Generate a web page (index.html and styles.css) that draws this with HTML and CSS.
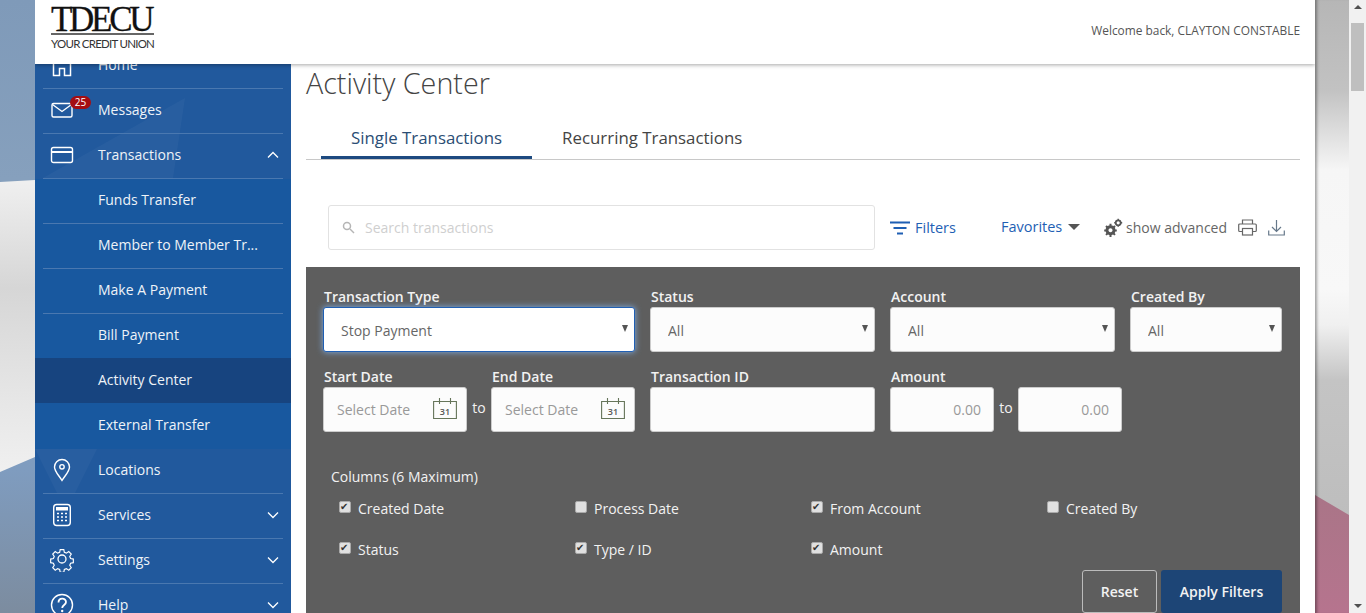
FILE: index.html
```html
<!DOCTYPE html>
<html lang="en">
<head>
  <meta charset="UTF-8">
  <title>Activity Center</title>
  <link rel="stylesheet" href="styles.css">
</head>
<body>

  <div class="page">
    <div class="edge edge-left"></div>

    <div class="shell">
      <header class="topbar">
        <div class="logo">
          <div class="logo-name">TDECU</div>
          <div class="logo-tag">YOUR CREDIT UNION</div>
        </div>
        <div class="welcome">Welcome back, CLAYTON CONSTABLE</div>
      </header>

      <nav class="sidebar">
        <svg class="watermark" width="256" height="613" viewBox="0 0 256 613" fill="#fff" fill-opacity="0.035"><path d="M8 178 150 98l-12 80z"/><path d="M0 449h62l-22 44H22z"/></svg>
        <a class="nav-row">
          <span class="nav-icon"><svg width="24" height="24" viewBox="0 0 24 24" fill="none" stroke="#fff" stroke-width="1.5"><path d="M12 1 3.500 8v14.500h6v-7h5v7h6V8z"/></svg></span>
          <span class="nav-text">Home</span>
        </a>
        <a class="nav-row">
          <span class="nav-icon">
            <svg width="24" height="24" viewBox="0 0 24 24" fill="none" stroke="#fff" stroke-width="1.400"><rect x="2" y="5.500" width="20" height="13.500" rx="1.500"/><path d="m2.500 6.500 9.500 7 9.500-7"/></svg>
            <span class="badge">25</span>
          </span>
          <span class="nav-text">Messages</span>
        </a>
        <a class="nav-row">
          <span class="nav-icon"><svg width="24" height="24" viewBox="0 0 24 24" fill="none" stroke="#fff" stroke-width="1.400"><rect x="1.500" y="4.500" width="21" height="15" rx="2"/><path d="M1.500 9h21" stroke-width="2"/></svg></span>
          <span class="nav-text">Transactions</span>
          <svg class="chev" width="12" height="8" viewBox="0 0 12 8" fill="none" stroke="#fff" stroke-width="1.300"><path d="m1 6.500 5-5 5 5"/></svg>
        </a>
        <div class="subnav">
          <a class="sub-row"><span>Funds Transfer</span></a>
          <a class="sub-row"><span>Member to Member Tr...</span></a>
          <a class="sub-row"><span>Make A Payment</span></a>
          <a class="sub-row"><span>Bill Payment</span></a>
          <a class="sub-row active"><span>Activity Center</span></a>
          <a class="sub-row last"><span>External Transfer</span></a>
        </div>
        <a class="nav-row">
          <span class="nav-icon"><svg width="24" height="24" viewBox="0 0 24 24" fill="none" stroke="#fff" stroke-width="1.400"><path d="M12 22.500C9 17.500 4.500 13.500 4.500 9a7.500 7.500 0 0 1 15 0c0 4.500-4.500 8.500-7.500 13.500z"/><circle cx="12" cy="8.800" r="2.200"/></svg></span>
          <span class="nav-text">Locations</span>
        </a>
        <a class="nav-row">
          <span class="nav-icon"><svg width="24" height="24" viewBox="0 0 24 24" fill="none" stroke="#fff" stroke-width="1.400"><rect x="3.700" y="1.500" width="16.600" height="21" rx="3"/><rect x="6" y="4" width="12" height="3.500" fill="#fff" stroke="none"/><path d="M7 10.500h2m2 0h2m2 0h2M7 14h2m2 0h2m2 0h2M7 17.500h2m2 0h2m2 0h2" stroke-width="1.600"/></svg></span>
          <span class="nav-text">Services</span>
          <svg class="chev" width="12" height="8" viewBox="0 0 12 8" fill="none" stroke="#fff" stroke-width="1.300"><path d="m1 1.500 5 5 5-5"/></svg>
        </a>
        <a class="nav-row">
          <span class="nav-icon"><svg width="24" height="24" viewBox="0 0 24 24" fill="none" stroke="#fff" stroke-width="1.300"><path d="m10 1.500 4 0 .6 3 2.300 1 2.600-1.700 2.800 2.800-1.700 2.600 1 2.300 3 .6 0 4-3 .6-1 2.300 1.700 2.600-2.800 2.800-2.600-1.700-2.300 1-.6 3-4 0-.6-3-2.300-1-2.600 1.700-2.800-2.800 1.700-2.600-1-2.300-3-.6 0-4 3-.6 1-2.300-1.700-2.600 2.800-2.800 2.600 1.700 2.300-1z" transform="translate(1.200 .2) scale(.9)"/><circle cx="12" cy="11" r="4"/></svg></span>
          <span class="nav-text">Settings</span>
          <svg class="chev" width="12" height="8" viewBox="0 0 12 8" fill="none" stroke="#fff" stroke-width="1.300"><path d="m1 1.500 5 5 5-5"/></svg>
        </a>
        <a class="nav-row">
          <span class="nav-icon"><svg width="24" height="24" viewBox="0 0 24 24" fill="none" stroke="#fff" stroke-width="1.400"><circle cx="12" cy="12" r="10.500"/><path d="M8.500 9.500c0-5 7.500-5 7.500-.5 0 3-3.800 3-3.800 6" stroke-width="1.800"/><circle cx="12.200" cy="18" r="1.200" fill="#fff" stroke="none"/></svg></span>
          <span class="nav-text">Help</span>
          <svg class="chev" width="12" height="8" viewBox="0 0 12 8" fill="none" stroke="#fff" stroke-width="1.300"><path d="m1 1.500 5 5 5-5"/></svg>
        </a>
      </nav>

      <main class="content">
        <h1 class="title">Activity Center</h1>

        <div class="tabs">
          <a class="tab current">Single Transactions</a>
          <a class="tab">Recurring Transactions</a>
        </div>

        <div class="toolbar">
          <div class="search">
            <svg width="13" height="13" viewBox="0 0 13 13" fill="none" stroke="#b5b5b5" stroke-width="1.500"><circle cx="5" cy="5" r="3.500"/><path d="m8 8 4 4"/></svg>
            <input class="search-input" type="text" placeholder="Search transactions">
          </div>
          <a class="filters-link">
            <svg width="20" height="14" viewBox="0 0 20 14" fill="none" stroke="#1f5fb4" stroke-width="2"><path d="M0 1.500h20M3.500 7h13M7 12.500h6"/></svg>
            Filters
          </a>
          <a class="favorites-link">Favorites <span class="caret"></span></a>
          <a class="advanced-link">
            <svg width="20" height="20" viewBox="0 0 20 20" fill="#555"><path d="M7.500 7.200a5 5 0 1 0 .01 0zm0 3a2 2 0 1 1-.01 0z" fill-rule="evenodd"/><path d="M7.500 5.800v2.400M7.500 16.500v2.400M1.200 12.400h2.400M11.400 12.400h2.400M3 8l1.700 1.700M10.300 15.200l1.700 1.700M3 16.900l1.700-1.700M10.300 9.700 12 8" stroke="#555" stroke-width="2"/><circle cx="15.200" cy="4.800" r="2.500" fill="none" stroke="#555" stroke-width="1.800"/><path d="M15.200.8v1.200M15.200 7.600v1.200M11.200 4.800h1.200M18 4.800h1.200" stroke="#555" stroke-width="1.400"/></svg>
            show advanced
          </a>
          <svg class="tool-icon" width="19" height="17" viewBox="0 0 19 17" fill="none" stroke="#666" stroke-width="1.200"><path d="M4.500 5V1h10v4M4.500 12.500H1.700A1 1 0 0 1 .7 11.500V6a1 1 0 0 1 1-1h15.600a1 1 0 0 1 1 1v5.500a1 1 0 0 1-1 1h-2.800"/><rect x="4.500" y="9.500" width="10" height="6.500"/></svg>
          <svg class="tool-icon" width="17" height="17" viewBox="0 0 17 17" fill="none" stroke="#66788a" stroke-width="1.200"><path d="M8.500 1v11M4 8l4.500 4.500L13 8M.7 11.500v4.500h15.600v-4.500"/></svg>
        </div>

        <section class="panel">
          <div class="field-row">
            <div class="field w-type">
              <label class="field-label" for="type">Transaction Type</label>
              <div class="select-wrap">
                <select id="type" class="control focused"><option>Stop Payment</option></select>
              </div>
            </div>
            <div class="field w-mid">
              <label class="field-label" for="status">Status</label>
              <div class="select-wrap">
                <select id="status" class="control"><option>All</option></select>
              </div>
            </div>
            <div class="field w-mid">
              <label class="field-label" for="account">Account</label>
              <div class="select-wrap">
                <select id="account" class="control"><option>All</option></select>
              </div>
            </div>
            <div class="field w-small">
              <label class="field-label" for="by">Created By</label>
              <div class="select-wrap">
                <select id="by" class="control"><option>All</option></select>
              </div>
            </div>
          </div>

          <div class="field-row second">
            <div class="field w-type">
              <div class="date-pair">
                <div class="field w-date">
                  <label class="field-label" for="start">Start Date</label>
                  <div class="date-box">
                    <input id="start" class="control date" type="text" placeholder="Select Date">
                    <svg class="cal" width="24" height="21" viewBox="0 0 24 21" fill="none" stroke="#66755a" stroke-width="1.100"><path d="M.6 3.500h22.800v17H.6zM6.500 0v6M17.500 0v6"/><text x="12" y="16.500" text-anchor="middle" class="cal-text">31</text></svg>
                  </div>
                </div>
                <span class="to">to</span>
                <div class="field w-date">
                  <label class="field-label" for="end">End Date</label>
                  <div class="date-box">
                    <input id="end" class="control date" type="text" placeholder="Select Date">
                    <svg class="cal" width="24" height="21" viewBox="0 0 24 21" fill="none" stroke="#66755a" stroke-width="1.100"><path d="M.6 3.500h22.800v17H.6zM6.500 0v6M17.500 0v6"/><text x="12" y="16.500" text-anchor="middle" class="cal-text">31</text></svg>
                  </div>
                </div>
              </div>
            </div>
            <div class="field w-mid">
              <label class="field-label" for="txid">Transaction ID</label>
              <input id="txid" class="control" type="text">
            </div>
            <div class="field">
              <label class="field-label" for="min">Amount</label>
              <div class="amount-pair">
                <input id="min" class="control amount" type="text" placeholder="0.00">
                <span class="to">to</span>
                <input id="max" class="control amount" type="text" placeholder="0.00">
              </div>
            </div>
          </div>

          <div class="columns-title">Columns (6 Maximum)</div>
          <div class="columns-grid">
            <label class="check"><input type="checkbox" checked> Created Date</label>
            <label class="check"><input type="checkbox"> Process Date</label>
            <label class="check"><input type="checkbox" checked> From Account</label>
            <label class="check"><input type="checkbox"> Created By</label>
            <label class="check"><input type="checkbox" checked> Status</label>
            <label class="check"><input type="checkbox" checked> Type / ID</label>
            <label class="check"><input type="checkbox" checked> Amount</label>
          </div>

          <div class="actions">
            <button class="btn btn-reset">Reset</button>
            <button class="btn btn-apply">Apply Filters</button>
          </div>
        </section>
      </main>
    </div>

    <div class="edge edge-right"></div>

    <div class="scrollbar">
      <span class="arrow up"></span>
      <div class="thumb"></div>
      <span class="arrow down"></span>
    </div>
  </div>

</body>
</html>
```

FILE: styles.css
```css
* {
  box-sizing: border-box;
}
html, body {
  margin: 0;
  height: 100%;
  overflow: hidden;
}
body {
  font-family: "Open Sans", sans-serif;
  font-size: 14px;
  color: #555;
}
.page {
  display: flex;
  height: 613px;
}

/* photo behind the shell */
.edge {
  position: relative;
  width: 35px;
  flex: none;
}
.edge-left {
  background: linear-gradient(#7f9ab9 0, #86a0bd 180px, #7f9cbf 470px, #7c8c9f 613px);
}
.edge-left::before {
  content: "";
  position: absolute;
  top: 178px;
  left: 0;
  right: 0;
  height: 296px;
  background: linear-gradient(#f0f0f0 0, #d6d6d6 110px, #e6e6e6 220px, #f0f0f0 296px);
  clip-path: polygon(0 4px, 100% 2px, 100% 279px, 0 294px);
}
.edge-right {
  width: 34px;
  background: linear-gradient(#b6b6b6 0, #c2c2c2 90px, #f6f6f6 170px, #f8f8f8 290px, #f0f0f0 325px, #c4c4c4 380px, #bdbdbd 520px);
  box-shadow: inset 4px 0 3px -2px rgba(0,0,0,0.35);
}
.edge-right::before {
  content: "";
  position: absolute;
  top: 490px;
  left: 0;
  right: 0;
  bottom: 0;
  background: linear-gradient(#a97587, #b6748e);
  box-shadow: inset 4px 0 3px -2px rgba(0,0,0,0.35);
  clip-path: polygon(0 5px, 100% 25px, 100% 100%, 0 100%);
}

.shell {
  position: relative;
  display: flex;
  width: 1280px;
  flex: none;
  background: #fff;
  overflow: hidden;
}
.topbar {
  position: absolute;
  top: 0;
  left: 0;
  right: 0;
  z-index: 5;
  height: 64px;
  display: flex;
  justify-content: space-between;
  padding: 7px 15px 0 16px;
  background: #fff;
  box-shadow: 0 1px 4px rgba(0,0,0,0.35);
}
.logo {
  width: 103px;
  color: #111;
}
.logo-name {
  font-family: "Liberation Serif", serif;
  font-size: 35px;
  line-height: 25px;
  height: 28px;
  letter-spacing: -3.300px;
  -webkit-text-stroke: 0.3px #111;
  border-bottom: 2px solid #666;
  white-space: nowrap;
}
.logo-tag {
  font-family: "Lato", sans-serif;
  font-size: 11.500px;
  line-height: 13px;
  letter-spacing: -0.750px;
  margin-top: 2px;
  white-space: nowrap;
  color: #333;
}
.welcome {
  margin-top: 15px;
  font-size: 11.900px;
  color: #555;
}

/* left menu */
.sidebar {
  position: relative;
  width: 256px;
  flex: none;
  padding-top: 44px;
  background: #21599d;
  color: #eef3f8;
}
.watermark {
  position: absolute;
  top: 0;
  left: 0;
}
.nav-row {
  position: relative;
  display: flex;
  align-items: center;
  height: 45px;
  margin: 0 8px;
  border-bottom: 1px solid #4a78b0;
  padding-left: 7px;
  font-size: 14px;
  font-weight: 500;
}
.nav-icon {
  position: relative;
  width: 24px;
  height: 24px;
  margin: 0 24px 2px 0;
}
.nav-text {
  flex: 1;
  margin-bottom: 4px;
}
.chev {
  margin: 0 4px 2px 0;
}
.badge {
  position: absolute;
  top: -2px;
  left: 20px;
  width: 21px;
  height: 13px;
  border-radius: 7px;
  background: #a50d12;
  color: #fff;
  font-size: 10px;
  line-height: 13px;
  text-align: center;
}
.subnav {
  position: relative;
  background: #18589f;
}
.sub-row {
  display: block;
  height: 45px;
  padding: 0 8px;
  font-size: 14px;
  font-weight: 500;
}
.sub-row span {
  display: block;
  height: 45px;
  line-height: 42px;
  padding-left: 55px;
  border-bottom: 1px solid #4a78b0;
}
.sub-row.active {
  background: #17447f;
  margin-top: -1px;
}
.sub-row.active span {
  border-bottom: 0;
  line-height: 44px;
}
.sub-row.last {
  height: 46px;
}
.sub-row.last span {
  border-bottom: 0;
  line-height: 44px;
}

/* main column */
.content {
  flex: 1;
  padding: 63px 15px 0;
  min-width: 0;
}
.title {
  margin: 0;
  font-size: 28.700px;
  font-weight: 300;
  line-height: 40px;
  color: #444;
}
.tabs {
  display: flex;
  margin-top: 17px;
  padding-left: 15px;
  height: 40px;
  border-bottom: 1px solid #c8c8c8;
}
.tab {
  padding: 0 30px;
  font-size: 16.850px;
  line-height: 36px;
  height: 39px;
  color: #444;
}
.tab.current {
  border-bottom: 3px solid #1d4a80;
  color: #2b4d74;
}
.toolbar {
  display: flex;
  align-items: center;
  height: 45px;
  margin: 45px 0 17px 22px;
}
.search {
  display: flex;
  align-items: center;
  width: 547px;
  height: 45px;
  padding-left: 13px;
  border: 1px solid #e2e2e2;
  border-radius: 3px;
}
.search-input {
  flex: 1;
  border: 0;
  outline: 0;
  margin-left: 8px;
  font: 14px "Open Sans", sans-serif;
}
.search-input::placeholder {
  color: #cfcfcf;
}
.filters-link {
  display: flex;
  align-items: center;
  gap: 5px;
  margin-left: 15px;
  color: #1f5fb4;
  font-weight: 500;
  font-size: 14.500px;
}
.favorites-link {
  margin-left: 45px;
  margin-top: -2px;
  color: #1f5fb4;
  font-weight: 500;
  font-size: 14.500px;
}
.caret {
  display: inline-block;
  margin-left: 2px;
  vertical-align: 2px;
  border: 6px solid transparent;
  border-bottom: 0;
  border-top: 6px solid #555;
}
.advanced-link {
  display: flex;
  align-items: center;
  gap: 3px;
  margin-left: 23px;
  font-size: 14px;
  color: #666;
}
.tool-icon {
  margin-left: 11px;
}

/* filter panel */
.panel {
  height: 400px;
  padding: 20px 18px 0 17px;
  background: #5e5e5e;
  color: #fff;
}
.field-row {
  display: flex;
  gap: 15px;
}
.field-row.second {
  margin-top: 15px;
}
.field-label {
  display: block;
  height: 20px;
  padding-left: 1px;
  font-size: 14px;
  font-weight: 600;
  line-height: 20px;
  color: #f2f2f2;
}
.w-type {
  width: 312px;
  flex: none;
}
.w-mid {
  width: 225px;
  flex: none;
}
.w-small {
  width: 152px;
  flex: none;
}
.w-date {
  width: 144px;
  flex: none;
}
.control {
  display: block;
  width: 100%;
  height: 45px;
  padding: 0 17px;
  border: 1px solid #ccc;
  border-radius: 3px;
  outline: 0;
  background: #fcfcfc;
  color: #666;
  font: 14px "Open Sans", sans-serif;
  appearance: none;
}
select.control {
  padding-top: 2px;
}
.control::placeholder {
  color: #999;
}
.control.focused {
  background: #fff;
  border-color: #1f5fb4;
  box-shadow: 0 0 6px #7fb0e8;
}
.select-wrap {
  position: relative;
}
.select-wrap::after {
  content: "";
  position: absolute;
  top: 18px;
  right: 7px;
  border: 3px solid transparent;
  border-bottom: 0;
  border-top: 7px solid #555;
}
.date-pair, .amount-pair {
  display: flex;
}
.to {
  align-self: flex-end;
  width: 24px;
  padding-bottom: 15px;
  text-align: center;
  font-size: 14px;
  color: #f2f2f2;
}
.date-box {
  position: relative;
}
.date {
  padding: 0 13px;
}
.cal {
  position: absolute;
  top: 11px;
  right: 10px;
}
.cal-text {
  font-family: "Open Sans", sans-serif;
  font-size: 9px;
  font-weight: 600;
  fill: #555;
  stroke: none;
}
.amount {
  width: 104px;
  padding: 0 12px;
  text-align: right;
}
.columns-title {
  margin: 35px 0 0 8px;
  font-size: 14px;
  line-height: 20px;
  color: #f2f2f2;
}
.columns-grid {
  display: grid;
  grid-template-columns: repeat(4, 236px);
  grid-auto-rows: 41px;
  margin: 11px 0 0 16px;
}
.check {
  display: flex;
  align-items: center;
  gap: 7px;
  height: 20px;
  font-size: 14px;
  color: #f2f2f2;
}
.check input {
  position: relative;
  width: 12px;
  height: 12px;
  margin: 0 0 2px;
  flex: none;
  appearance: none;
  border: 1px solid #aaa;
  border-radius: 2px;
  background: #e0e0e0;
}
.check input:checked::after {
  content: "\2714";
  position: absolute;
  top: -2px;
  left: 0;
  font-family: "DejaVu Sans", sans-serif;
  font-size: 10px;
  line-height: 14px;
  color: #333;
}
.actions {
  display: flex;
  justify-content: flex-end;
  gap: 4px;
  margin-top: -10px;
}
.btn {
  height: 43px;
  border-radius: 3px;
  color: #f2f2f2;
  font: 600 14px "Open Sans", sans-serif;
}
.btn-reset {
  width: 75px;
  background: transparent;
  border: 1px solid #bbb;
}
.btn-apply {
  width: 121px;
  background: #1d4576;
  border: 0;
}

/* fake browser scrollbar */
.scrollbar {
  position: relative;
  width: 17px;
  flex: none;
  background: #f1f1f1;
}
.thumb {
  position: absolute;
  top: 23px;
  left: 2px;
  right: 2px;
  height: 68px;
  background: #bfbfbf;
}
.arrow {
  position: absolute;
  left: 5px;
  border: 4px solid transparent;
}
.arrow.up {
  top: 5px;
  border-top: 0;
  border-bottom: 4px solid #505050;
}
.arrow.down {
  bottom: 5px;
  border-bottom: 0;
  border-top: 4px solid #505050;
}
```
